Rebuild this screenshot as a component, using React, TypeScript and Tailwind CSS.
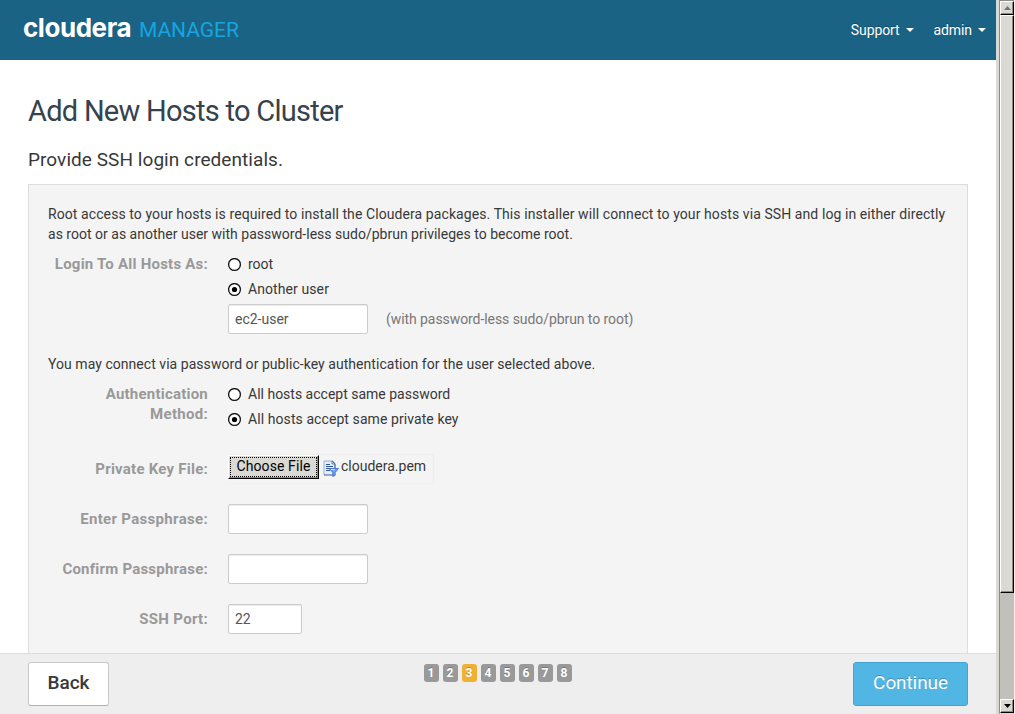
import { ReactNode } from 'react';

function Caret() {
  return (
    <svg width="8" height="4" viewBox="0 0 8 4" className="ml-[6px]">
      <path d="M0 0h8L4 4z" fill="#fff" />
    </svg>
  );
}

function Radio({ on, children, className }: { on?: boolean; children: ReactNode; className: string }) {
  return (
    <label className="flex h-5 items-center">
      <svg width="14" height="14" viewBox="0 0 14 14" className="mt-px mr-[6px]">
        <circle cx="6.5" cy="6.500" r="5.9" fill="#fff" stroke="#111" strokeWidth="1.3" />
        {on && <circle cx="6.5" cy="6.500" r="2.600" fill="#000" />}
      </svg>
      <span className={className}>{children}</span>
    </label>
  );
}

function Label({ children }: { children: ReactNode }) {
  return <div className="w-40 shrink-0 text-right text-[15px] leading-5 font-bold whitespace-nowrap text-[#999]">{children}</div>;
}

function Field({ value, className }: { value?: string; className: string }) {
  return (
    <div className={`flex h-[30px] items-center rounded-[2px] border border-[#ccc] bg-white px-[6px] text-[#555] shadow-[inset_0_1px_1px_rgba(0,0,0,0.08)] ${className}`}>
      {value}
    </div>
  );
}

function FileIcon() {
  return (
    <svg width="16" height="17" viewBox="0 0 16 17">
      <path d="M1 1h8l3 3v11H1z" fill="#e3edfb" />
      <path d="M1 15V1h8" fill="none" stroke="#9db0d3" />
      <path d="M1 15h10M12 4v5M9 1l3 3" fill="none" stroke="#3c5c9c" strokeWidth="1.2" />
      <path d="M9 1v3h3z" fill="#c3d3ee" stroke="#3c5c9c" strokeWidth=".6" />
      <path d="M3 4.500h4M3 6.500h7M3 8.500h4M3 10.500h4" stroke="#2f5597" />
      <path d="M6 8.500h9.500l-3.300 4v2.800l-2.400 1.200v-4z" fill="#6ea0f0" stroke="#3567c4" strokeWidth=".8" />
      <path d="M8 9.500h4" stroke="#c9dcfb" />
    </svg>
  );
}

const raised = 'border border-t-white border-l-white border-r-black border-b-black bg-[#dad9d4] shadow-[inset_-1px_-1px_0_#8b8a86]';

function ArrowButton({ down }: { down?: boolean }) {
  return (
    <div className={`flex h-[14px] w-[14px] shrink-0 items-center justify-center ${raised}`}>
      <svg width="7" height="4" viewBox="0 0 7 4">
        {down ? <path d="M0 0h7L3.500 4z" fill="#000" /> : <path d="M0 4h7L3.500 0z" fill="#777" />}
      </svg>
    </div>
  );
}

export default function App() {
  return (
    <div className="flex h-[714px] w-[1015px] overflow-hidden bg-white font-['Roboto',sans-serif] text-[14px] leading-5 text-[#383838]">
      <div className="flex w-[996px] flex-col">
        <header className="flex h-[60px] shrink-0 items-center justify-between bg-[#1a6384] pr-[10px] pl-[23px]">
          <div className="flex h-[53px] items-baseline">
            <span className="w-[116px] font-['Inter',sans-serif] text-[26px] leading-[47px] font-bold tracking-[-0.45px] whitespace-nowrap text-white">cloudera</span>
            <span className="text-[21px] tracking-[-0.05px] whitespace-nowrap text-[#16a5e0]">MANAGER</span>
          </div>
          <nav className="flex items-center tracking-[-0.1px] text-white [text-shadow:0_-1px_0_rgba(0,0,0,0.25)]">
            <span>Support</span>
            <Caret />
            <span className="ml-5">admin</span>
            <Caret />
          </nav>
        </header>
        <main className="flex h-[593px] shrink-0 flex-col px-7">
          <h1 className="mt-[31px] text-[29px] leading-10 tracking-[-0.73px] whitespace-nowrap text-[#36424c]">Add New Hosts to Cluster</h1>
          <h2 className="mt-[19px] text-[19px] leading-5 tracking-[0.06px]">Provide SSH login credentials.</h2>
          <section className="mt-[14px] flex w-[940px] grow flex-col border border-b-0 border-[#ddd] bg-[#f4f4f4] px-[19px] pt-[19px]">
            <p className="whitespace-nowrap">
              <span className="tracking-[0.087px]">Root access to your hosts is required to install the Cloudera packages. This installer will connect to your hosts via SSH and log in either directly</span>
              <br />
              <span className="tracking-[0.01px]">as root or as another user with password-less sudo/pbrun privileges to become root.</span>
            </p>
            <div className="mt-[10px] flex gap-5">
              <Label><span className="tracking-[0.23px]">Login To All Hosts As:</span></Label>
              <div className="flex flex-col gap-[5px]">
                <Radio className="">root</Radio>
                <Radio on className="tracking-[0.09px]">Another user</Radio>
                <div className="flex items-center gap-[18px]">
                  <Field value="ec2-user" className="w-[140px]" />
                  <span className="tracking-[-0.07px] text-[#777]">(with password-less sudo/pbrun to root)</span>
                </div>
              </div>
            </div>
            <p className="mt-5 tracking-[0.045px] whitespace-nowrap">You may connect via password or public-key authentication for the user selected above.</p>
            <div className="mt-[10px] flex gap-5">
              <Label>
                <span className="tracking-[0.22px]">Authentication</span>
                <br />
                <span className="tracking-[0.3px]">Method:</span>
              </Label>
              <div className="flex flex-col gap-[5px]">
                <Radio className="">All hosts accept same password</Radio>
                <Radio on className="tracking-[0.08px]">All hosts accept same private key</Radio>
              </div>
            </div>
            <div className="mt-[25px] flex h-[30px] items-center gap-5">
              <Label><span className="tracking-[0.24px]">Private Key File:</span></Label>
              <div className="flex h-[30px] w-[206px] items-start border border-l-0 border-[#eee] border-b-[#f1f1f1]">
                <div className="flex h-[24px] w-[91px] border border-t-white border-r-black border-b-black border-l-white bg-[#dad9d4] p-px shadow-[inset_-1px_-1px_0_#8b8a86]">
                  <div className="flex grow items-center justify-center border border-dotted border-black pb-[2px] tracking-[0.1px] text-black">Choose File</div>
                </div>
                <div className="mt-[5px] ml-1"><FileIcon /></div>
                <span className="mt-px ml-[2px]">cloudera.pem</span>
              </div>
            </div>
            <div className="mt-5 flex items-center gap-5">
              <Label><span className="tracking-[0.32px]">Enter Passphrase:</span></Label>
              <Field className="w-[140px]" />
            </div>
            <div className="mt-5 flex items-center gap-5">
              <Label><span className="tracking-[0.22px]">Confirm Passphrase:</span></Label>
              <Field className="w-[140px]" />
            </div>
            <div className="mt-5 flex items-center gap-5">
              <Label><span className="tracking-[0.3px]">SSH Port:</span></Label>
              <Field value="22" className="w-[74px]" />
            </div>
          </section>
        </main>
        <footer className="flex h-[61px] shrink-0 items-start justify-between border-t border-[#ddd] bg-[#eee] px-7 pt-2">
          <div className="w-[115px]">
            <button className="h-[44px] w-[81px] rounded-[3px] border border-[#c8c8c8] border-b-[#b0b0b0] bg-white pb-[2px] text-[19px] font-medium">Back</button>
          </div>
          <ol className="mt-[2px] flex gap-1">
            {[1, 2, 3, 4, 5, 6, 7, 8].map((n) => (
              <li key={n} className={`flex h-[18px] w-[15px] items-center justify-center rounded-[3px] pr-px text-[12px] font-bold text-white [text-shadow:0_-1px_0_rgba(0,0,0,0.25)] ${n === 3 ? 'bg-[#f0b035]' : 'bg-[#999]'}`}>{n}</li>
            ))}
          </ol>
          <button className="h-[44px] w-[115px] rounded-[3px] border border-[#46a3d0] bg-[#52b6e4] pb-[2px] text-[19px] tracking-[-0.1px] text-white [text-shadow:0_-1px_0_rgba(0,0,0,0.25)]">Continue</button>
        </footer>
      </div>
      <div className="w-[3px] bg-[#dad9d4]" />
      <div className="flex w-[15px] flex-col border-t border-b border-l border-t-[#8b8a86] border-b-[#dad9d4] border-l-[#8b8a86] bg-[#c1c0bb]">
        <ArrowButton />
        <div className={`h-[578px] w-[14px] shrink-0 ${raised}`} />
        <div className="grow" />
        <ArrowButton down />
      </div>
      <div className="w-px bg-[#f4f4f4]" />
    </div>
  );
}
